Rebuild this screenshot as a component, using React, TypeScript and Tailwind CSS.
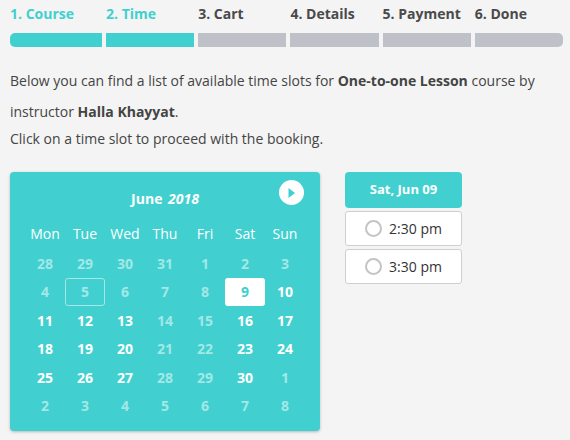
import React from 'react';

const steps = [
  { label: '1. Course', done: true },
  { label: '2. Time', done: true },
  { label: '3. Cart', done: false },
  { label: '4. Details', done: false },
  { label: '5. Payment', done: false },
  { label: '6. Done', done: false },
];

const weekdays = ['Mon', 'Tue', 'Wed', 'Thu', 'Fri', 'Sat', 'Sun'];

// on: day with free slots (bold white), otherwise greyed out
type Day = { d: number; on: boolean };
const rows: Day[][] = [
  [28, 29, 30, 31, 1, 2, 3].map((d) => ({ d, on: false })),
  [
    { d: 4, on: false },
    { d: 5, on: false },
    { d: 6, on: false },
    { d: 7, on: false },
    { d: 8, on: false },
    { d: 9, on: true },
    { d: 10, on: true },
  ],
  [
    { d: 11, on: true },
    { d: 12, on: true },
    { d: 13, on: true },
    { d: 14, on: false },
    { d: 15, on: false },
    { d: 16, on: true },
    { d: 17, on: true },
  ],
  [
    { d: 18, on: true },
    { d: 19, on: true },
    { d: 20, on: true },
    { d: 21, on: false },
    { d: 22, on: false },
    { d: 23, on: true },
    { d: 24, on: true },
  ],
  [
    { d: 25, on: true },
    { d: 26, on: true },
    { d: 27, on: true },
    { d: 28, on: false },
    { d: 29, on: false },
    { d: 30, on: true },
    { d: 1, on: false },
  ],
  [2, 3, 4, 5, 6, 7, 8].map((d) => ({ d, on: false })),
];

const slots = ['2:30 pm', '3:30 pm'];

export default function App() {
  return (
    <div
      className="min-h-screen w-[570px] h-[440px] overflow-hidden bg-[#f4f4f4] px-[10px] pt-[5px]"
      style={{ fontFamily: '"Open Sans", "Liberation Sans", sans-serif' }}
    >
      {/* Steps */}
      <div className="grid grid-cols-[92px_repeat(5,1fr)] gap-x-[4px] w-[553px]">
        {steps.map((s) => (
          <div
            key={s.label}
            className={`text-[14px] font-bold leading-[18px] whitespace-nowrap ${s.done ? 'text-[#41d0cf]' : 'text-[#4a4a4a]'}`}
          >
            {s.label}
          </div>
        ))}
        {steps.map((s, i) => (
          <div
            key={'bar' + i}
            className={`mt-[10px] h-[14px] ${s.done ? 'bg-[#41d0cf]' : 'bg-[#bec2c8]'} ${
              i === 0 ? 'rounded-l-[5px]' : ''
            } ${i === steps.length - 1 ? 'rounded-r-[5px]' : ''}`}
          />
        ))}
      </div>

      {/* Intro text */}
      <div className="mt-[18px] text-[14px] text-[#444] w-[550px]">
        <p className="leading-[31px]">
          Below you can find a list of available time slots for <b className="font-bold">One-to-one Lesson</b> course by
          instructor <b className="font-bold">Halla Khayyat</b>.
        </p>
        <p className="leading-[24px]">Click on a time slot to proceed with the booking.</p>
      </div>

      <div className="mt-[21px] flex items-start gap-[25px]">
        {/* Calendar */}
        <div className="w-[310px] rounded-[4px] bg-[#41d0cf] px-[15px] pb-[11px] shadow-[0_1px_3px_rgba(0,0,0,0.25)]">
          <div className="relative h-[47px] flex items-center justify-center text-white text-[14px] font-bold">
            <span className="mt-[5px]">
              June <i className="italic ml-[2px]">2018</i>
            </span>
            <button className="absolute right-[1px] top-[8px] w-[25px] h-[25px] rounded-full bg-white flex items-center justify-center">
              <svg width="9" height="12" viewBox="0 0 9 12">
                <path d="M1.5 1 L8 6 L1.5 11 Z" fill="#41d0cf" />
              </svg>
            </button>
          </div>
          <div className="grid grid-cols-7">
            {weekdays.map((w) => (
              <div key={w} className="h-[28px] flex items-center justify-center text-white text-[14px]">
                {w}
              </div>
            ))}
          </div>
          <div className="mt-[2px] flex flex-col gap-[0.5px]">
            {rows.map((r, ri) => (
              <div key={ri} className="grid grid-cols-7">
                {r.map((c, ci) => {
                  const selected = ri === 1 && ci === 5;
                  const today = ri === 1 && ci === 1;
                  return (
                    <div
                      key={ci}
                      className={`h-[28px] flex items-center justify-center text-[14px] font-bold rounded-[3px] ${
                        selected
                          ? 'bg-white text-[#41d0cf]'
                          : c.on
                          ? 'text-white'
                          : 'text-[#a3e8e7]'
                      } ${today ? 'border border-[#a3e8e7]' : ''}`}
                    >
                      {c.d}
                    </div>
                  );
                })}
              </div>
            ))}
          </div>
        </div>

        {/* Slots */}
        <div className="w-[117px] flex flex-col gap-[3px]">
          <div className="h-[36px] rounded-[4px] bg-[#41d0cf] text-white text-[13px] font-bold flex items-center justify-center">
            Sat, Jun 09
          </div>
          {slots.map((s) => (
            <div
              key={s}
              className="h-[35px] rounded-[3px] border border-[#cfcfcf] bg-white flex items-center justify-center gap-[7px] text-[14px] text-[#333]"
            >
              <span className="w-[17px] h-[17px] rounded-full border-2 border-[#c4c4c4]" />
              {s}
            </div>
          ))}
        </div>
      </div>
    </div>
  );
}
